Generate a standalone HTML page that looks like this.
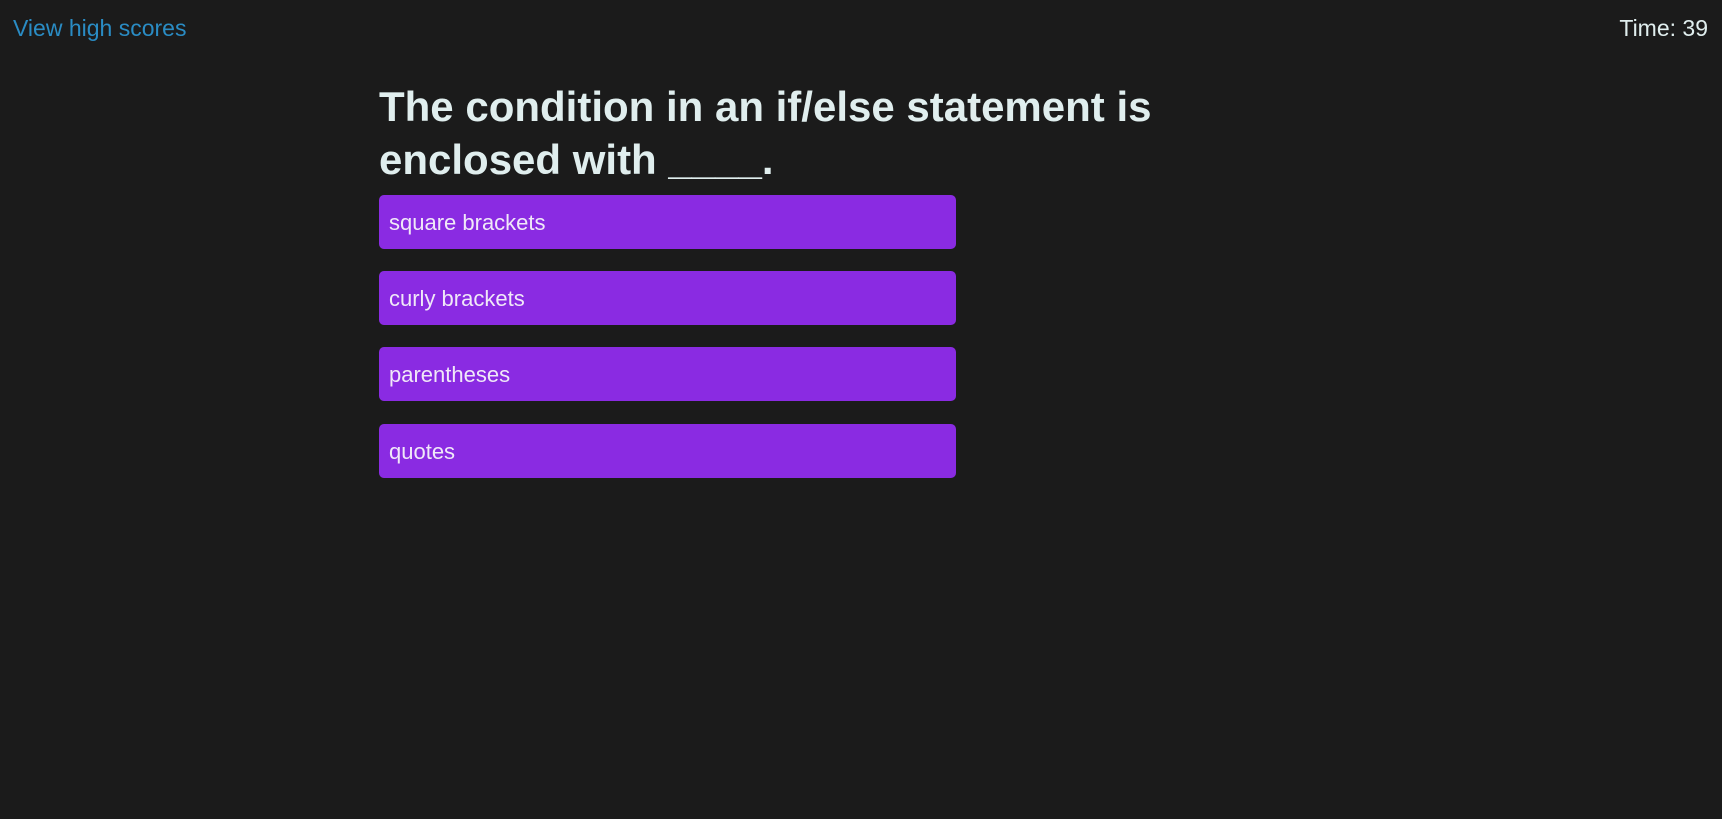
<!DOCTYPE html>
<html><head><meta charset="utf-8"><style>
body{margin:0;background:#1b1b1b;width:1722px;height:819px;overflow:hidden;font-family:"Liberation Sans",sans-serif;position:relative}
.link{position:absolute;left:13px;top:15px;font-size:23px;color:#2a8cc4}
.time{position:absolute;right:14px;top:15px;font-size:23px;color:#e0eeee}
h1{position:absolute;left:379px;top:80px;margin:0;width:1000px;font-size:42px;line-height:53px;color:#e0eeee;font-weight:bold}
.b{position:absolute;left:379px;width:577px;height:54px;background:#8a2be2;border-radius:5px;color:#f0e8f8;font-size:22px;line-height:56px;padding-left:10px;box-sizing:border-box}
</style></head><body>
<div class="link">View high scores</div>
<div class="time">Time: 39</div>
<h1>The condition in an if/else statement is<br>enclosed with ____.</h1>
<div class="b" style="top:195px">square brackets</div>
<div class="b" style="top:271px">curly brackets</div>
<div class="b" style="top:347px">parentheses</div>
<div class="b" style="top:424px">quotes</div>
</body></html>
